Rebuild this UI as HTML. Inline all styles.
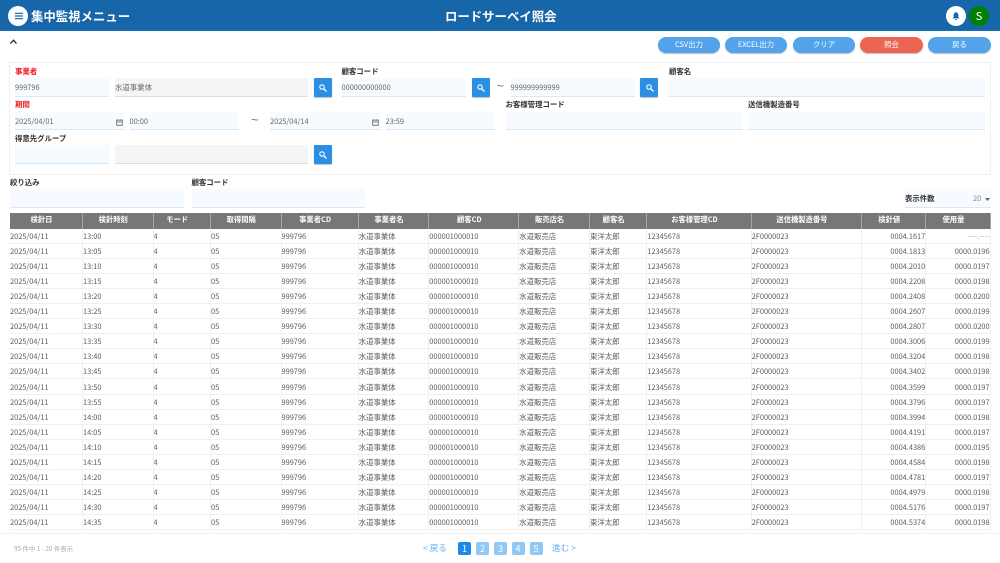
<!DOCTYPE html>
<html lang="ja"><head><meta charset="utf-8"><title>ロードサーベイ照会</title>
<style>
*{box-sizing:border-box;margin:0;padding:0}
html,body{width:1000px;height:563px;overflow:hidden;background:#fff}
body{position:relative;font-family:"Noto Sans CJK JP","Liberation Sans",sans-serif;font-size:7.4px;color:#5c5c5c}
.a,.r{filter:blur(.25px)}
.a{position:absolute}
.hd{left:0;top:0;width:1000px;height:31px;background:#1666a9;border-bottom:1px solid #1a70b8;filter:none}
.tt{color:#fff;font-weight:700;font-size:12.4px;line-height:16px;top:8px;white-space:nowrap}
.c{border-radius:50%}
.b{top:36.5px;height:16px;border-radius:8px;background:#53a3ea;color:#fff;text-align:center;font-size:7.4px;line-height:16px;box-shadow:0 1px 1px rgba(0,0,0,.25)}
.l{font-weight:700;color:#333;font-size:7.4px;line-height:10px;white-space:nowrap}
.red{color:#f01822}
.i{background:#f7fbff;border-bottom:1.5px solid #d3eafd;height:18.5px;line-height:20px;color:#666;font-size:7.4px;white-space:nowrap}
.g{background:#f5f5f5;border-bottom:1.5px solid #ddd}
.s{width:18px;height:18.5px;background:#2b8fe3;border-radius:1px;box-shadow:0 1px 1px rgba(0,0,0,.25)}
.s svg{position:absolute;left:5.5px;top:5.5px}
.r{position:absolute;left:10px;width:981px;height:15.1px;display:flex;border-bottom:1px solid #f0f0f0;line-height:15px;white-space:nowrap}
.r span{display:block;border-right:1px solid #f0f0f0;flex:none;height:100%;overflow:hidden}
.r span:nth-child(1){width:73px}.r span:nth-child(2){width:70.5px}.r span:nth-child(3){width:57.5px}.r span:nth-child(4){width:70.5px}.r span:nth-child(5){width:77.2px}.r span:nth-child(6){width:70.6px}.r span:nth-child(7){width:90px}.r span:nth-child(8){width:70.7px}.r span:nth-child(9){width:57.3px}.r span:nth-child(10){width:104.4px}.r span:nth-child(11){width:110.6px}.r span:nth-child(12){width:64px;text-align:right}.r span:nth-child(13){width:64.4px;text-align:right}
.h{top:213px;height:15.5px;background:#777;border:0;color:#fff;font-weight:700;line-height:15px;font-size:7.3px}
.r.h span{text-align:center;border-right:1px solid #a5a5a5;padding-right:9px}
.p{top:542px;width:13px;height:13px;background:#90c8f6;color:#fff;border-radius:2px;text-align:center;line-height:13px;font-size:9px}
.n{top:542px;color:#64b0f0;font-size:8.6px;line-height:13px;white-space:nowrap}
.t{font-size:13px;line-height:14px;color:#777;font-family:"Liberation Sans",sans-serif}
</style></head><body>
<div class="a hd"></div>
<div class="a c" style="left:8px;top:6px;width:20px;height:20px;background:#fff"></div>
<svg class="a" style="left:14.5px;top:12px" width="8" height="8" viewBox="0 0 8 8"><path d="M0 1.300h8M0 4h8M0 6.700h8" stroke="#1666a9" stroke-width="1.200"/></svg>
<div class="a tt" style="left:31px">集中監視メニュー</div>
<div class="a tt" style="left:445px">ロードサーベイ照会</div>
<div class="a c" style="left:945.5px;top:5.5px;width:20.5px;height:20.5px;background:#fff"></div>
<svg class="a" style="left:952px;top:11px" width="8" height="10" viewBox="0 0 10 11"><path d="M5 0.500C5.600 0.500 6 1 6 1.500C7.500 2 8 3.300 8 4.500V7L9.300 8.500H.7L2 7V4.500C2 3.300 2.500 2 4 1.500C4 1 4.400.5 5 .5ZM3.800 9.300H6.200C6.200 10 5.600 10.500 5 10.500S3.800 10 3.800 9.300Z" fill="#1666a9"/></svg>
<div class="a c" style="left:969px;top:6px;width:20px;height:20px;background:#008000;color:#fff;text-align:center;line-height:20px;font-size:11px">S</div>
<svg class="a" style="left:10px;top:39px" width="7" height="5" viewBox="0 0 7 5"><path d="M.5 4.500L3.500 1.200L6.500 4.500" fill="none" stroke="#222" stroke-width="1.300"/></svg>

<div class="a b" style="left:658px;width:62px">CSV出力</div>
<div class="a b" style="left:725px;width:62px">EXCEL出力</div>
<div class="a b" style="left:793px;width:62px">クリア</div>
<div class="a b" style="left:860px;width:63px;background:#ec6553">照会</div>
<div class="a b" style="left:928px;width:63px">戻る</div>

<div class="a" style="left:9px;top:62px;width:982px;height:113px;border:1px solid #f0f0f0"></div>

<div class="a l red" style="left:15px;top:67px">事業者</div>
<div class="a i" style="left:15px;top:78px;width:94px">999796</div>
<div class="a i g" style="left:115px;top:78px;width:193px">水道事業体</div>
<div class="a s" style="left:313.5px;top:78px"><svg width="8" height="8" viewBox="0 0 8 8"><circle cx="3" cy="3" r="2.200" fill="none" stroke="#fff" stroke-width="1.100"/><path d="M4.600 4.600L7.500 7.500" stroke="#fff" stroke-width="1.300"/></svg></div>
<div class="a l" style="left:341.5px;top:67px">顧客コード</div>
<div class="a i" style="left:341.5px;top:78px;width:124px">000000000000</div>
<div class="a s" style="left:471.5px;top:78px"><svg width="8" height="8" viewBox="0 0 8 8"><circle cx="3" cy="3" r="2.200" fill="none" stroke="#fff" stroke-width="1.100"/><path d="M4.600 4.600L7.500 7.500" stroke="#fff" stroke-width="1.300"/></svg></div>
<div class="a t" style="left:496.5px;top:79px">~</div>
<div class="a i" style="left:510.5px;top:78px;width:124px">999999999999</div>
<div class="a s" style="left:640px;top:78px"><svg width="8" height="8" viewBox="0 0 8 8"><circle cx="3" cy="3" r="2.200" fill="none" stroke="#fff" stroke-width="1.100"/><path d="M4.600 4.600L7.500 7.500" stroke="#fff" stroke-width="1.300"/></svg></div>
<div class="a l" style="left:669px;top:67px">顧客名</div>
<div class="a i" style="left:669px;top:78px;width:316px"></div>

<div class="a l red" style="left:15px;top:100px">期間</div>
<div class="a i" style="left:15px;top:111.5px;width:109px">2025/04/01</div>
<svg class="a" style="left:116px;top:118.5px" width="7" height="7" viewBox="0 0 7 7"><path d="M.7 1.200H6.300V6.300H.7ZM.7 3H6.300M2 .2V1.500M5 .2V1.500" fill="none" stroke="#666" stroke-width=".8"/></svg>
<div class="a i" style="left:129.5px;top:111.5px;width:109.5px">00:00</div>
<div class="a t" style="left:251px;top:113px">~</div>
<div class="a i" style="left:270px;top:111.5px;width:110px">2025/04/14</div>
<svg class="a" style="left:371.5px;top:118.5px" width="7" height="7" viewBox="0 0 7 7"><path d="M.7 1.200H6.300V6.300H.7ZM.7 3H6.300M2 .2V1.500M5 .2V1.500" fill="none" stroke="#666" stroke-width=".8"/></svg>
<div class="a i" style="left:385.5px;top:111.5px;width:109.5px">23:59</div>
<div class="a l" style="left:505.5px;top:100px">お客様管理コード</div>
<div class="a i" style="left:505.5px;top:111.5px;width:237px"></div>
<div class="a l" style="left:748px;top:100px">送信機製造番号</div>
<div class="a i" style="left:748px;top:111.5px;width:237px"></div>

<div class="a l" style="left:15px;top:133.5px">得意先グループ</div>
<div class="a i" style="left:15px;top:145px;width:94px"></div>
<div class="a i g" style="left:115px;top:145px;width:193px"></div>
<div class="a s" style="left:313.5px;top:145px"><svg width="8" height="8" viewBox="0 0 8 8"><circle cx="3" cy="3" r="2.200" fill="none" stroke="#fff" stroke-width="1.100"/><path d="M4.600 4.600L7.500 7.500" stroke="#fff" stroke-width="1.300"/></svg></div>

<div class="a l" style="left:10px;top:178px">絞り込み</div>
<div class="a i" style="left:10px;top:189px;width:174px"></div>
<div class="a l" style="left:191.5px;top:178px">顧客コード</div>
<div class="a i" style="left:191.5px;top:189px;width:173.5px"></div>
<div class="a i" style="left:905px;top:189px;width:85.5px"></div>
<div class="a l" style="left:905px;top:194px">表示件数</div>
<div class="a" style="left:973px;top:194px;line-height:10px;color:#888">20</div>
<svg class="a" style="left:984.5px;top:197.5px" width="5" height="3" viewBox="0 0 5 3"><path d="M0 0H5L2.500 3Z" fill="#666"/></svg>

<div class="r h"><span>検針日</span><span>検針時刻</span><span>モード</span><span>取得間隔</span><span>事業者CD</span><span>事業者名</span><span>顧客CD</span><span>販売店名</span><span>顧客名</span><span>お客様管理CD</span><span>送信機製造番号</span><span>検針値</span><span>使用量</span></div>
<div class="r" style="top:228.5px"><span>2025/04/11</span><span>13:00</span><span>4</span><span>05</span><span>999796</span><span>水道事業体</span><span>000001000010</span><span>水道販売店</span><span>東洋太郎</span><span>12345678</span><span>2F0000023</span><span>0004.1617</span><span style="color:#aaa">----.----</span></div>
<div class="r" style="top:243.6px"><span>2025/04/11</span><span>13:05</span><span>4</span><span>05</span><span>999796</span><span>水道事業体</span><span>000001000010</span><span>水道販売店</span><span>東洋太郎</span><span>12345678</span><span>2F0000023</span><span>0004.1813</span><span>0000.0196</span></div>
<div class="r" style="top:258.7px"><span>2025/04/11</span><span>13:10</span><span>4</span><span>05</span><span>999796</span><span>水道事業体</span><span>000001000010</span><span>水道販売店</span><span>東洋太郎</span><span>12345678</span><span>2F0000023</span><span>0004.2010</span><span>0000.0197</span></div>
<div class="r" style="top:273.8px"><span>2025/04/11</span><span>13:15</span><span>4</span><span>05</span><span>999796</span><span>水道事業体</span><span>000001000010</span><span>水道販売店</span><span>東洋太郎</span><span>12345678</span><span>2F0000023</span><span>0004.2208</span><span>0000.0198</span></div>
<div class="r" style="top:288.9px"><span>2025/04/11</span><span>13:20</span><span>4</span><span>05</span><span>999796</span><span>水道事業体</span><span>000001000010</span><span>水道販売店</span><span>東洋太郎</span><span>12345678</span><span>2F0000023</span><span>0004.2408</span><span>0000.0200</span></div>
<div class="r" style="top:304px"><span>2025/04/11</span><span>13:25</span><span>4</span><span>05</span><span>999796</span><span>水道事業体</span><span>000001000010</span><span>水道販売店</span><span>東洋太郎</span><span>12345678</span><span>2F0000023</span><span>0004.2607</span><span>0000.0199</span></div>
<div class="r" style="top:319.1px"><span>2025/04/11</span><span>13:30</span><span>4</span><span>05</span><span>999796</span><span>水道事業体</span><span>000001000010</span><span>水道販売店</span><span>東洋太郎</span><span>12345678</span><span>2F0000023</span><span>0004.2807</span><span>0000.0200</span></div>
<div class="r" style="top:334.2px"><span>2025/04/11</span><span>13:35</span><span>4</span><span>05</span><span>999796</span><span>水道事業体</span><span>000001000010</span><span>水道販売店</span><span>東洋太郎</span><span>12345678</span><span>2F0000023</span><span>0004.3006</span><span>0000.0199</span></div>
<div class="r" style="top:349.3px"><span>2025/04/11</span><span>13:40</span><span>4</span><span>05</span><span>999796</span><span>水道事業体</span><span>000001000010</span><span>水道販売店</span><span>東洋太郎</span><span>12345678</span><span>2F0000023</span><span>0004.3204</span><span>0000.0198</span></div>
<div class="r" style="top:364.4px"><span>2025/04/11</span><span>13:45</span><span>4</span><span>05</span><span>999796</span><span>水道事業体</span><span>000001000010</span><span>水道販売店</span><span>東洋太郎</span><span>12345678</span><span>2F0000023</span><span>0004.3402</span><span>0000.0198</span></div>
<div class="r" style="top:379.5px"><span>2025/04/11</span><span>13:50</span><span>4</span><span>05</span><span>999796</span><span>水道事業体</span><span>000001000010</span><span>水道販売店</span><span>東洋太郎</span><span>12345678</span><span>2F0000023</span><span>0004.3599</span><span>0000.0197</span></div>
<div class="r" style="top:394.6px"><span>2025/04/11</span><span>13:55</span><span>4</span><span>05</span><span>999796</span><span>水道事業体</span><span>000001000010</span><span>水道販売店</span><span>東洋太郎</span><span>12345678</span><span>2F0000023</span><span>0004.3796</span><span>0000.0197</span></div>
<div class="r" style="top:409.7px"><span>2025/04/11</span><span>14:00</span><span>4</span><span>05</span><span>999796</span><span>水道事業体</span><span>000001000010</span><span>水道販売店</span><span>東洋太郎</span><span>12345678</span><span>2F0000023</span><span>0004.3994</span><span>0000.0198</span></div>
<div class="r" style="top:424.8px"><span>2025/04/11</span><span>14:05</span><span>4</span><span>05</span><span>999796</span><span>水道事業体</span><span>000001000010</span><span>水道販売店</span><span>東洋太郎</span><span>12345678</span><span>2F0000023</span><span>0004.4191</span><span>0000.0197</span></div>
<div class="r" style="top:439.9px"><span>2025/04/11</span><span>14:10</span><span>4</span><span>05</span><span>999796</span><span>水道事業体</span><span>000001000010</span><span>水道販売店</span><span>東洋太郎</span><span>12345678</span><span>2F0000023</span><span>0004.4386</span><span>0000.0195</span></div>
<div class="r" style="top:455px"><span>2025/04/11</span><span>14:15</span><span>4</span><span>05</span><span>999796</span><span>水道事業体</span><span>000001000010</span><span>水道販売店</span><span>東洋太郎</span><span>12345678</span><span>2F0000023</span><span>0004.4584</span><span>0000.0198</span></div>
<div class="r" style="top:470.1px"><span>2025/04/11</span><span>14:20</span><span>4</span><span>05</span><span>999796</span><span>水道事業体</span><span>000001000010</span><span>水道販売店</span><span>東洋太郎</span><span>12345678</span><span>2F0000023</span><span>0004.4781</span><span>0000.0197</span></div>
<div class="r" style="top:485.2px"><span>2025/04/11</span><span>14:25</span><span>4</span><span>05</span><span>999796</span><span>水道事業体</span><span>000001000010</span><span>水道販売店</span><span>東洋太郎</span><span>12345678</span><span>2F0000023</span><span>0004.4979</span><span>0000.0198</span></div>
<div class="r" style="top:500.3px"><span>2025/04/11</span><span>14:30</span><span>4</span><span>05</span><span>999796</span><span>水道事業体</span><span>000001000010</span><span>水道販売店</span><span>東洋太郎</span><span>12345678</span><span>2F0000023</span><span>0004.5176</span><span>0000.0197</span></div>
<div class="r" style="top:515.4px"><span>2025/04/11</span><span>14:35</span><span>4</span><span>05</span><span>999796</span><span>水道事業体</span><span>000001000010</span><span>水道販売店</span><span>東洋太郎</span><span>12345678</span><span>2F0000023</span><span>0004.5374</span><span>0000.0198</span></div>

<div class="a" style="left:0;top:533px;width:1000px;height:1px;background:#f0f0f0"></div>
<div class="a" style="left:14px;top:543.5px;font-size:6.4px;line-height:10px;color:#aaa;white-space:nowrap">95 件中 1 - 20 件表示</div>
<div class="a n" style="left:423px">&lt; 戻る</div>
<div class="a p" style="left:458px;background:#1e88e5">1</div>
<div class="a p" style="left:476px">2</div>
<div class="a p" style="left:494px">3</div>
<div class="a p" style="left:511.5px">4</div>
<div class="a p" style="left:529.5px">5</div>
<div class="a n" style="left:552px">進む &gt;</div>
</body></html>
